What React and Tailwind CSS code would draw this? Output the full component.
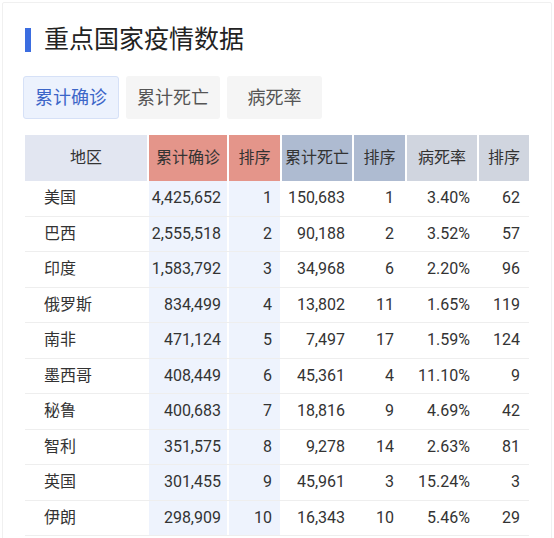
import React from "react";

const rows = [
  ["美国", "4,425,652", "1", "150,683", "1", "3.40%", "62"],
  ["巴西", "2,555,518", "2", "90,188", "2", "3.52%", "57"],
  ["印度", "1,583,792", "3", "34,968", "6", "2.20%", "96"],
  ["俄罗斯", "834,499", "4", "13,802", "11", "1.65%", "119"],
  ["南非", "471,124", "5", "7,497", "17", "1.59%", "124"],
  ["墨西哥", "408,449", "6", "45,361", "4", "11.10%", "9"],
  ["秘鲁", "400,683", "7", "18,816", "9", "4.69%", "42"],
  ["智利", "351,575", "8", "9,278", "14", "2.63%", "81"],
  ["英国", "301,455", "9", "45,961", "3", "15.24%", "3"],
  ["伊朗", "298,909", "10", "16,343", "10", "5.46%", "29"],
];

const cols = "grid grid-cols-[122px_78px_51px_70px_51px_70px_50px] gap-x-[2px]";

export default function App() {
  return (
    <div
      className="w-[554px] h-[538px] overflow-hidden bg-white pl-[2px] pt-[2px]"
      style={{ fontFamily: 'Roboto, "Noto Sans CJK SC", sans-serif' }}
    >
      <div className="w-[550px] h-[560px] border border-[#f0f0f0] rounded-[2px]">
        <div className="flex items-center pl-[22px] pt-[22px]">
          <div className="w-[6px] h-[24px] bg-[#3b6de0]" />
          <div className="ml-[13px] text-[25px] leading-[30px] text-[#222]">重点国家疫情数据</div>
        </div>
        <div className="flex gap-[7px] pl-[20px] mt-[21px]">
          <div className="w-[96px] h-[43px] flex items-center justify-center rounded-[3px] border border-[#d6e1f7] bg-[#ecf2fd] text-[18px] text-[#3c66c8]">累计确诊</div>
          <div className="w-[94px] h-[43px] flex items-center justify-center rounded-[3px] bg-[#f5f5f5] text-[18px] text-[#555]">累计死亡</div>
          <div className="w-[95px] h-[43px] flex items-center justify-center rounded-[3px] bg-[#f5f5f5] text-[18px] text-[#555]">病死率</div>
        </div>
        <div className="ml-[22px] mt-[16px] w-[504px] text-[16px] text-[#333]">
          <div className={`${cols} h-[46px]`}>
            <div className="bg-[#e2e6f1] flex items-center justify-center">地区</div>
            <div className="bg-[#e4958a] flex items-center justify-center">累计确诊</div>
            <div className="bg-[#e4958a] flex items-center justify-center">排序</div>
            <div className="bg-[#aebbd1] flex items-center justify-center">累计死亡</div>
            <div className="bg-[#aebbd1] flex items-center justify-center">排序</div>
            <div className="bg-[#d0d5df] flex items-center justify-center">病死率</div>
            <div className="bg-[#d0d5df] flex items-center justify-center">排序</div>
          </div>
          {rows.map((r) => (
            <div key={r[0]} className={`${cols} h-[35.5px] border-b border-[#eeeeee]`}>
              <div className="flex items-center pl-[19px]">{r[0]}</div>
              <div className="bg-[#eef3fd] flex items-center justify-end pr-[6px]">{r[1]}</div>
              <div className="bg-[#eef3fd] flex items-center justify-end pr-[8px]">{r[2]}</div>
              <div className="flex items-center justify-end pr-[7px]">{r[3]}</div>
              <div className="flex items-center justify-end pr-[11px]">{r[4]}</div>
              <div className="flex items-center justify-end pr-[7px]">{r[5]}</div>
              <div className="flex items-center justify-end pr-[9px]">{r[6]}</div>
            </div>
          ))}
        </div>
      </div>
    </div>
  );
}
